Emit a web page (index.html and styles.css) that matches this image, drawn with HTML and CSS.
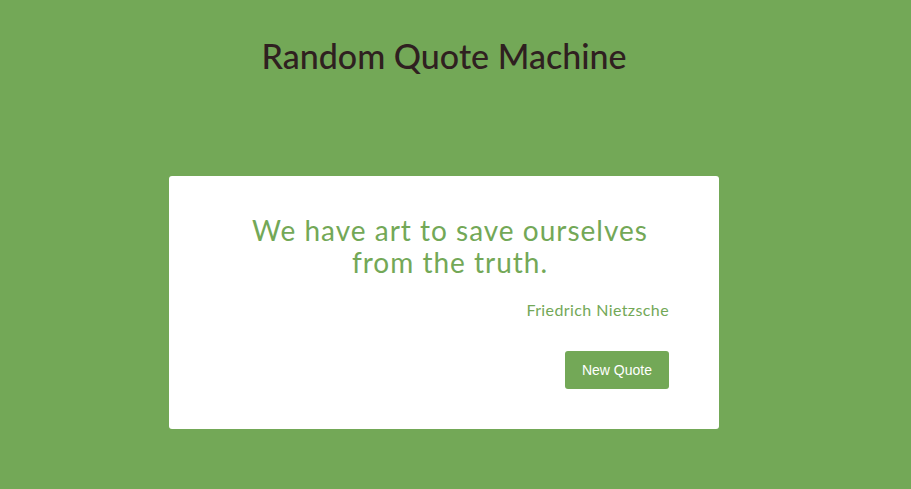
FILE: index.html
```html
<!DOCTYPE html>
<html>
<head>
<meta charset="utf-8">
<link rel="stylesheet" href="styles.css">
</head>
<body>
<div class="page">
  <h1 class="title">Random Quote Machine</h1>
  <div class="card">
    <div class="quote">We have art to save ourselves from the truth.</div>
    <div class="author">Friedrich Nietzsche</div>
    <div class="actions"><button class="btn">New Quote</button></div>
  </div>
</div>
</body>
</html>
```
FILE: styles.css
```css
html, body {
  margin: 0;
  padding: 0;
  background: #73a857;
  height: 100%;
}
.page {
  width: 888px;
  display: flex;
  flex-direction: column;
  align-items: center;
  font-family: Lato, "Open Sans", sans-serif;
}
.title {
  margin: 36px 0 0;
  height: 40px;
  line-height: 40px;
  font-size: 34px;
  font-weight: 500;
  color: #2f2020;
}
.card {
  margin-top: 100px;
  width: 550px;
  box-sizing: border-box;
  background: #fff;
  border-radius: 3px;
  padding: 38px 50px 40px;
  display: flex;
  flex-direction: column;
}
.quote {
  padding: 0 0 0 12px;
  text-align: center;
  font-size: 28px;
  line-height: 32px;
  letter-spacing: 1px;
  color: #73a857;
}
.author {
  margin-top: 22px;
  text-align: right;
  font-size: 16px;
  line-height: 20px;
  letter-spacing: 0.4px;
  color: #73a857;
}
.actions {
  margin-top: 31px;
  display: flex;
  justify-content: flex-end;
}
.btn {
  width: 104px;
  height: 38px;
  border: none;
  border-radius: 3px;
  background: #73a857;
  color: #fff;
  font-family: "Liberation Sans", Arial, sans-serif;
  font-size: 14px;
  padding: 0;
}
```
